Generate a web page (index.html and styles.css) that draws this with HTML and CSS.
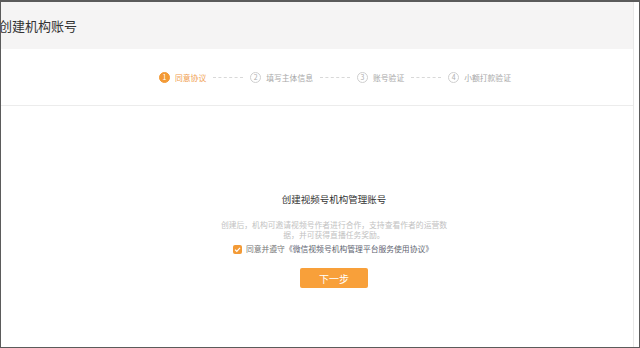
FILE: index.html
```html
<!DOCTYPE html>
<html lang="zh-CN">
<head>
  <meta charset="UTF-8">
  <title>创建机构账号</title>
  <link rel="stylesheet" href="styles.css">
</head>
<body>
  <div class="frame">
    <div class="page">
      <!-- Header -->
      <div class="header">
        <h1 class="title">创建机构账号</h1>
      </div>
      <!-- Steps -->
      <div class="steps">
        <div class="step active"><span class="num">1</span><span class="label">同意协议</span></div>
        <span class="dash"></span>
        <div class="step"><span class="num">2</span><span class="label">填写主体信息</span></div>
        <span class="dash"></span>
        <div class="step"><span class="num">3</span><span class="label">账号验证</span></div>
        <span class="dash"></span>
        <div class="step"><span class="num">4</span><span class="label">小额打款验证</span></div>
      </div>
      <!-- Agreement -->
      <div class="content">
        <h2 class="content-title">创建视频号机构管理账号</h2>
        <p class="desc">创建后，机构可邀请视频号作者进行合作，支持查看作者的运营数据，并可获得直播任务奖励。</p>
        <label class="agree">
          <span class="check">
            <svg width="9" height="9" viewBox="0 0 9 9"><path d="M2 4.6 L3.8 6.3 L7 2.8" fill="none" stroke="#fff" stroke-width="1.2"/></svg>
          </span>
          <span>同意并遵守<span class="link">《微信视频号机构管理平台服务使用协议》</span></span>
        </label>
        <button class="next">下一步</button>
      </div>
    </div>
  </div>
</body>
</html>
```

FILE: styles.css
```css
body {
  margin: 0;
  font-family: "Noto Sans CJK SC", "Noto Sans", sans-serif;
  background: #fff;
}

.frame {
  width: 640px;
  height: 348px;
  box-sizing: border-box;
  border: 1px solid #5b5b5b;
  border-top-width: 2px;
  overflow: hidden;
  display: flex;
}

.page {
  width: 632px;
  height: 100%;
  border-right: 1px solid #e8e8e8;
  display: flex;
  flex-direction: column;
}

/* Header */
.header {
  height: 47px;
  background: #f5f4f4;
  display: flex;
  align-items: center;
}
.title {
  margin: 0 0 0 -2px;
  font-size: 13px;
  font-weight: normal;
  color: #333;
}

/* Steps */
.steps {
  height: 56px;
  border-bottom: 1px solid #ececec;
  display: flex;
  align-items: center;
  justify-content: center;
  padding-left: 36px;
  gap: 7px;
}
.step {
  display: flex;
  align-items: center;
  gap: 5px;
  font-size: 7.8px;
  color: #a8a8a8;
}
.num {
  width: 11px;
  height: 11px;
  box-sizing: border-box;
  border: 1px solid #cfcfcf;
  border-radius: 50%;
  display: flex;
  align-items: center;
  justify-content: center;
  font-size: 7px;
  color: #b0b0b0;
}
.step.active { color: #f0a050; }
.step.active .num {
  background: #f39a36;
  border-color: #f39a36;
  color: #fff;
}
.dash {
  width: 30px;
  border-top: 1px dashed #d8d8d8;
}

/* Content */
.content {
  flex: 1;
  display: flex;
  flex-direction: column;
  align-items: center;
  padding-top: 87px;
  padding-left: 34px;
}
.content-title {
  margin: 0;
  font-size: 9.5px;
  line-height: 12px;
  font-weight: normal;
  color: #333;
}
.desc {
  margin: 15px 0 0;
  width: 228px;
  font-size: 7.8px;
  line-height: 10px;
  color: #c2c2c2;
  text-align: center;
}
.agree {
  margin-top: 4px;
  display: flex;
  align-items: center;
  gap: 4px;
  font-size: 7.8px;
  line-height: 10px;
  color: #777;
  margin-left: -2px;
}
.check {
  width: 9px;
  height: 9px;
  border-radius: 2px;
  background: #f39a36;
  display: flex;
}
.link { color: #5e6470; }
.next {
  margin-top: 14px;
  width: 68px;
  height: 20px;
  border: none;
  border-radius: 2px;
  background: #f8a03a;
  color: #fff;
  font-family: inherit;
  font-size: 10px;
  padding: 0;
}
```
